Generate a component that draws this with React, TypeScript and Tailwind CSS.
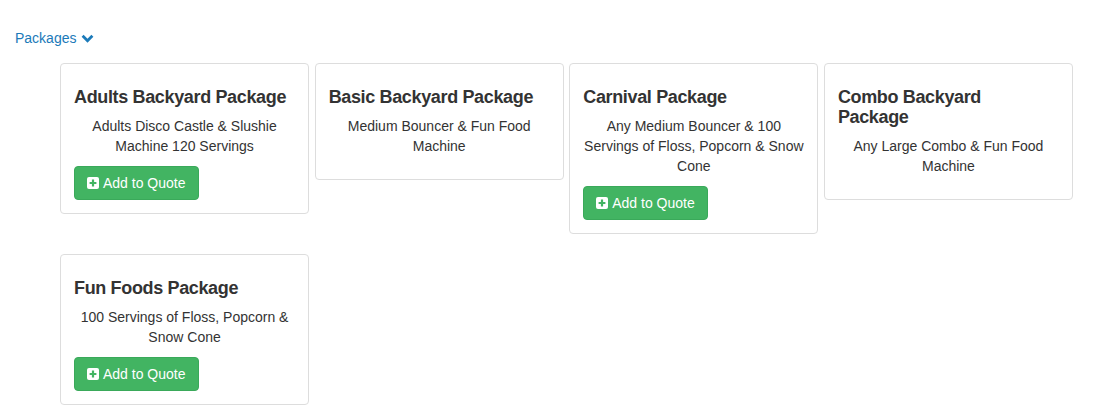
import React from 'react';

type Pkg = { title: string; desc: string; quote: boolean };

const packages: Pkg[] = [
  { title: 'Adults Backyard Package', desc: 'Adults Disco Castle & Slushie Machine 120 Servings', quote: true },
  { title: 'Basic Backyard Package', desc: 'Medium Bouncer & Fun Food Machine', quote: false },
  { title: 'Carnival Package', desc: 'Any Medium Bouncer & 100 Servings of Floss, Popcorn & Snow Cone', quote: true },
  { title: 'Combo Backyard Package', desc: 'Any Large Combo & Fun Food Machine', quote: false },
  { title: 'Fun Foods Package', desc: '100 Servings of Floss, Popcorn & Snow Cone', quote: true },
];

const PlusSquare = () => (
  <svg width="12" height="12" viewBox="0 0 12 12" className="shrink-0">
    <rect x="0" y="0" width="12" height="12" rx="2" fill="#fff" />
    <path d="M6 2.6v6.8M2.6 6h6.8" stroke="#42b462" strokeWidth="2.2" />
  </svg>
);

const Chevron = () => (
  <svg width="13" height="9" viewBox="0 0 13 9" className="ml-[5px] mt-[1px]">
    <path d="M1.6 1.8l4.9 4.9 4.9-4.9" fill="none" stroke="#1b7ab9" strokeWidth="2.8" />
  </svg>
);

const Card: React.FC<{ p: Pkg }> = ({ p }) => (
  <div className="border border-[#dddddd] rounded-[4px] bg-white pt-[23px] pb-[13px] px-[13px]">
    <h3 className="text-[18px] leading-[20px] font-bold tracking-[-0.35px] text-[#333] mb-[9px] pr-[3px]">{p.title}</h3>
    <p className="text-[14px] leading-[20px] text-[#333] text-center mb-[10px]">{p.desc}</p>
    {p.quote && (
      <button className="flex items-center gap-[4px] h-[34px] px-[12px] bg-[#42b462] border border-[#3aa95a] rounded-[4px] text-white text-[14px]">
        <PlusSquare />
        <span>Add to Quote</span>
      </button>
    )}
  </div>
);

export default function App() {
  return (
    <div className="w-[1112px] h-[412px] bg-white overflow-hidden" style={{ fontFamily: '"Liberation Sans", Arial, sans-serif' }}>
      <div className="pt-[26px] pl-[15px]">
        <a className="inline-flex items-center text-[14px] leading-[20px] text-[#1b7ab9]">
          Packages
          <Chevron />
        </a>
      </div>
      <div className="ml-[60px] mt-[13px] w-[1013px] grid grid-cols-4 gap-x-[5.5px] gap-y-[20px] items-start">
        {packages.map((p) => (
          <Card key={p.title} p={p} />
        ))}
      </div>
    </div>
  );
}
